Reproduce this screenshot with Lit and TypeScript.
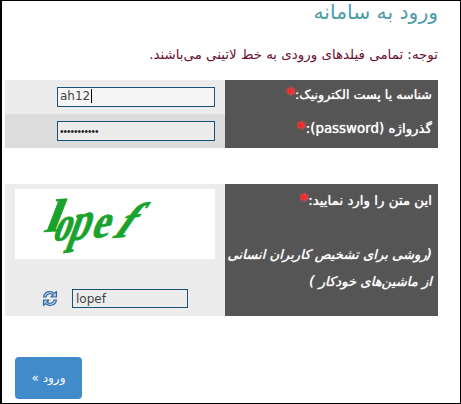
import { LitElement, html, css, svg } from "lit";
import { customElement } from "lit/decorators.js";

@customElement("app-root")
export class AppRoot extends LitElement {
  static styles = css`
    :host {
      display: block;
      box-sizing: border-box;
      width: 461px;
      height: 404px;
      background: #fff;
      border: solid #000;
      border-width: 1px 1px 1px 2px;
      font-family: "DejaVu Sans", sans-serif;
      overflow: hidden;
    }
    .page { direction: rtl; padding: 0 22px 0 0; }
    h1 {
      margin: 0;
      height: 24px;
      font-size: 20.3px;
      line-height: 23px;
      font-weight: normal;
      color: #4f9cab;
    }
    .note {
      margin: 18px 0 0 0;
      height: 37px;
      font-size: 13.4px;
      line-height: 24px;
      color: #6b1030;
      white-space: nowrap;
    }
    .table { display: flex; flex-direction: column; width: 433px; }
    .row { display: flex; height: 34px; }
    .label {
      box-sizing: border-box;
      width: 213px;
      flex: none;
      background: #555;
      color: #fff;
      font-size: 13.4px;
      font-weight: normal;
      text-shadow: 0 0 1px #fff;
      padding: 3px 6px 0 0;
      line-height: 24px;
      white-space: nowrap;
    }
    .label.first { font-size: 12.7px; }
    .star {
      color: #f22;
      font-size: 17px;
      line-height: 16px;
      font-weight: bold;
      text-shadow: 0 0 2px #f66;
      vertical-align: -1px;
    }
    .field {
      flex: 1;
      background: #ececec;
      display: flex;
      align-items: center;
      padding-right: 10px;
    }
    .row.alt .field { background: #dcdcdc; }
    input {
      box-sizing: border-box;
      width: 158px;
      height: 20px;
      direction: ltr;
      border: 1px solid #1a5276;
      background: #f5f5f5;
      padding: 0 2px;
      margin: 0;
      font: 12px "DejaVu Sans", sans-serif;
      color: #444;
      outline: none;
    }
    .row.alt input { background: #ececec; font: 10px "Liberation Sans", sans-serif; color: #222; }
    .caret { border-right: 1px solid #000; padding-right: 1px; }
    .fake {
      box-sizing: border-box;
      width: 158px;
      height: 20px;
      direction: ltr;
      border: 1px solid #1a5276;
      background: #f5f5f5;
      padding: 0 2px;
      font-size: 12px;
      line-height: 17px;
      color: #444;
    }
    .second { margin-top: 36px; }
    .second .row { height: 132px; }
    .second .label { padding-top: 5px; }
    .hint {
      margin-top: 28px;
      font-style: italic;
      font-size: 13.2px;
      line-height: 27px;
    }
    .captcha {
      flex: 1;
      background: #ececec;
      display: flex;
      flex-direction: column;
      padding: 5px 10px 0 10px;
    }
    .image { width: 200px; height: 70px; background: #fff; display: block; direction: ltr; }
    .answer {
      direction: ltr;
      display: flex;
      align-items: center;
      gap: 14px;
      margin: 30px 0 0 27px;
    }
    .answer input { width: 116px; height: 19px; background: #ececec; padding: 0 3px; }
    .btn {
      margin: 41px 13px 0 0;
      display: flex;
      justify-content: flex-end;
      padding-left: 13px;
    }
    button {
      width: 67px;
      height: 42px;
      border: 0;
      border-radius: 4px;
      background: #428bca;
      color: #fff;
      font: 12px "DejaVu Sans", sans-serif;
      padding: 0;
    }
    .cap {
      font-family: "Liberation Serif", serif;
      font-weight: bold;
      fill: #1aa32c;
      stroke: #1aa32c;
      stroke-width: 0.7;
    }
  `;

  captcha() {
    return svg`<svg class="image" viewBox="0 0 200 70" xmlns="http://www.w3.org/2000/svg">
      <g class="cap">
        <text font-size="46" transform="translate(28 43) rotate(-3) skewX(-24) scale(1.2 1)">l</text>
        <text font-size="44" transform="translate(36 52) rotate(-4) skewX(-25) scale(.8 1.1)">o</text>
        <text font-size="44" transform="translate(52 52) rotate(-8) skewX(-28) scale(.85 1.2)">p</text>
        <text font-size="44" transform="translate(75 50) rotate(-10) skewX(-28) scale(.95 1)">e</text>
        <text font-size="46" transform="translate(96 49) rotate(-5) skewX(-40) scale(1 1)">f</text>
      </g>
    </svg>`;
  }

  refresh() {
    return svg`<svg width="16" height="17" viewBox="0 0 16 17" xmlns="http://www.w3.org/2000/svg">
      <path d="M1.500 7C2 3.500 4.500 1.500 8 1.500c2 0 3.300.7 4.400 1.800L14.500 1.500V7H9l2-2C10.200 4.200 9.200 3.800 8 3.800 6 3.800 4.600 5 4.200 7z" fill="#a9c6e6" stroke="#2f64a0" stroke-width="1.100" stroke-linejoin="round"/>
      <path d="M14.500 10C14 13.500 11.500 15.500 8 15.500c-2 0-3.300-.7-4.400-1.800L1.500 15.500V10H7l-2 2c.8.8 1.800 1.200 3 1.200 2 0 3.400-1.200 3.800-3.200z" fill="#a9c6e6" stroke="#2f64a0" stroke-width="1.100" stroke-linejoin="round"/>
    </svg>`;
  }

  render() {
    return html`<div class="page">
      <h1>ورود به سامانه</h1>
      <p class="note">توجه: تمامی فیلدهای ورودی به خط لاتینی می‌باشند.</p>
      <div class="table">
        <div class="row">
          <div class="label first">شناسه یا پست الکترونیک:<span class="star">*</span></div>
          <div class="field"><div class="fake"><span class="caret">ah12</span></div></div>
        </div>
        <div class="row alt">
          <div class="label">گذرواژه (password):<span class="star">*</span></div>
          <div class="field"><input type="password" value="12345678901" /></div>
        </div>
      </div>
      <div class="table second">
        <div class="row">
          <div class="label">
            این متن را وارد نمایید:<span class="star">*</span>
            <div class="hint">(روشی برای تشخیص کاربران انسانی<br />از ماشین‌های خودکار )</div>
          </div>
          <div class="captcha">
            ${this.captcha()}
            <div class="answer">${this.refresh()}<input type="text" value="lopef" /></div>
          </div>
        </div>
      </div>
      <div class="btn"><button>ورود »</button></div>
    </div>`;
  }
}
